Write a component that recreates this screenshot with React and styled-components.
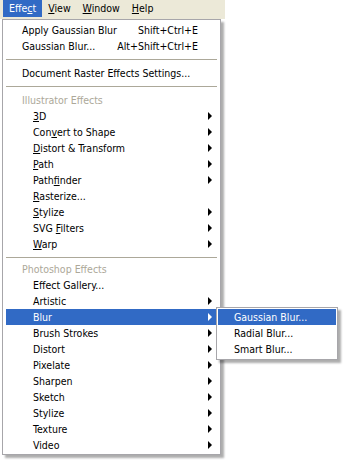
import React from "react"
import styled, { createGlobalStyle } from "styled-components"

const GlobalStyle = createGlobalStyle`
  *, *::before, *::after {
    box-sizing: border-box;
  }
  html, body {
    margin: 0;
    padding: 0;
    background: #fff;
  }
  body {
    font-family: "DejaVu Sans Condensed", "Liberation Sans", sans-serif;
    font-size: 10.5px;
    color: #000;
  }
`

const Page = styled.div`
  width: 345px;
  height: 462px;
  overflow: hidden;
  background: #fff;
`
const MenuBar = styled.div`
  display: flex;
  width: 225px;
  height: 19px;
  padding-left: 3px;
  background: #ece9d8;
`
const BarItem = styled.div`
  height: 17px;
  line-height: 17px;
  padding: 0 6px;
  background: ${p => (p.$active ? "#316ac5" : "transparent")};
  color: ${p => (p.$active ? "#fff" : "#000")};
`
const Menu = styled.div`
  position: relative;
  width: 219px;
  margin-left: 2px;
  padding: 2px 3px 1px;
  border: 1px solid #a7a6aa;
  background: #fff;
  box-shadow: 3px 3px 2px rgba(0, 0, 0, 0.32);
`
const Row = styled.div`
  position: relative;
  display: grid;
  grid-template-columns: 1fr auto 19px;
  align-items: center;
  height: 16px;
  padding-left: ${p => (p.$indent ? 27 : 16)}px;
  white-space: nowrap;
  background: ${p => (p.$active ? "#316ac5" : "transparent")};
  color: ${p => (p.$active ? "#fff" : p.$header ? "#aca899" : "#000")};
`
const Shortcut = styled.span`
  text-align: right;
`
const Arrow = styled.span`
  justify-self: start;
  margin-left: 10px;
  width: 0;
  height: 0;
  border-left: 4px solid currentColor;
  border-top: 4px solid transparent;
  border-bottom: 4px solid transparent;
`
const Separator = styled.div`
  height: 1px;
  margin: ${p => (p.$compact ? "5px 0 3px" : "5px 0")};
  background: #aca899;
`
const SubMenu = styled.div`
  position: absolute;
  left: 210px;
  top: -2px;
  width: 122px;
  padding: 1px 1px 2px;
  border: 1px solid #a7a6aa;
  background: #fff;
  color: #000;
  box-shadow: 3px 3px 2px rgba(0, 0, 0, 0.32);
  z-index: 2;
`
const SubRow = styled.div`
  height: 16px;
  line-height: 16px;
  padding-left: 16px;
  white-space: nowrap;
  background: ${p => (p.$active ? "#316ac5" : "transparent")};
  color: ${p => (p.$active ? "#fff" : "#000")};
`

// "&" marks the mnemonic letter
const Label = ({ text }) => {
  const i = text.indexOf("&")
  if (i < 0) return <span>{text}</span>
  return (
    <span>
      {text.slice(0, i)}
      <u>{text[i + 1]}</u>
      {text.slice(i + 2)}
    </span>
  )
}

const illustrator = [
  "&3D", "Con&vert to Shape", "&Distort & Transform", "&Path", "Path&finder",
  "&Rasterize...", "&Stylize", "SVG &Filters", "&Warp",
]
const photoshop = [
  "Effect Gallery...", "Artistic", "Blur", "Brush Strokes", "Distort", "Pixelate",
  "Sharpen", "Sketch", "Stylize", "Texture", "Video",
]
const noArrow = ["&Rasterize...", "Effect Gallery..."]

const App = () => (
  <Page>
    <GlobalStyle />
    <MenuBar>
      <BarItem $active><Label text="Effe&ct" /></BarItem>
      <BarItem><Label text="&View" /></BarItem>
      <BarItem><Label text="&Window" /></BarItem>
      <BarItem><Label text="&Help" /></BarItem>
    </MenuBar>
    <Menu>
      <Row>
        <span>Apply Gaussian Blur</span>
        <Shortcut>Shift+Ctrl+E</Shortcut>
      </Row>
      <Row>
        <span>Gaussian Blur...</span>
        <Shortcut>Alt+Shift+Ctrl+E</Shortcut>
      </Row>
      <Separator />
      <Row>
        <span>Document Raster Effects Settings...</span>
      </Row>
      <Separator />
      <Row $header>
        <span>Illustrator Effects</span>
      </Row>
      {illustrator.map(t => (
        <Row $indent key={t}>
          <Label text={t} />
          <span />
          {!noArrow.includes(t) && <Arrow />}
        </Row>
      ))}
      <Separator $compact />
      <Row $header>
        <span>Photoshop Effects</span>
      </Row>
      {photoshop.map(t => (
        <Row $indent key={t} $active={t === "Blur"}>
          <Label text={t} />
          <span />
          {!noArrow.includes(t) && <Arrow />}
          {t === "Blur" && (
            <SubMenu>
              <SubRow $active>Gaussian Blur...</SubRow>
              <SubRow>Radial Blur...</SubRow>
              <SubRow>Smart Blur...</SubRow>
            </SubMenu>
          )}
        </Row>
      ))}
    </Menu>
  </Page>
)

export default App
